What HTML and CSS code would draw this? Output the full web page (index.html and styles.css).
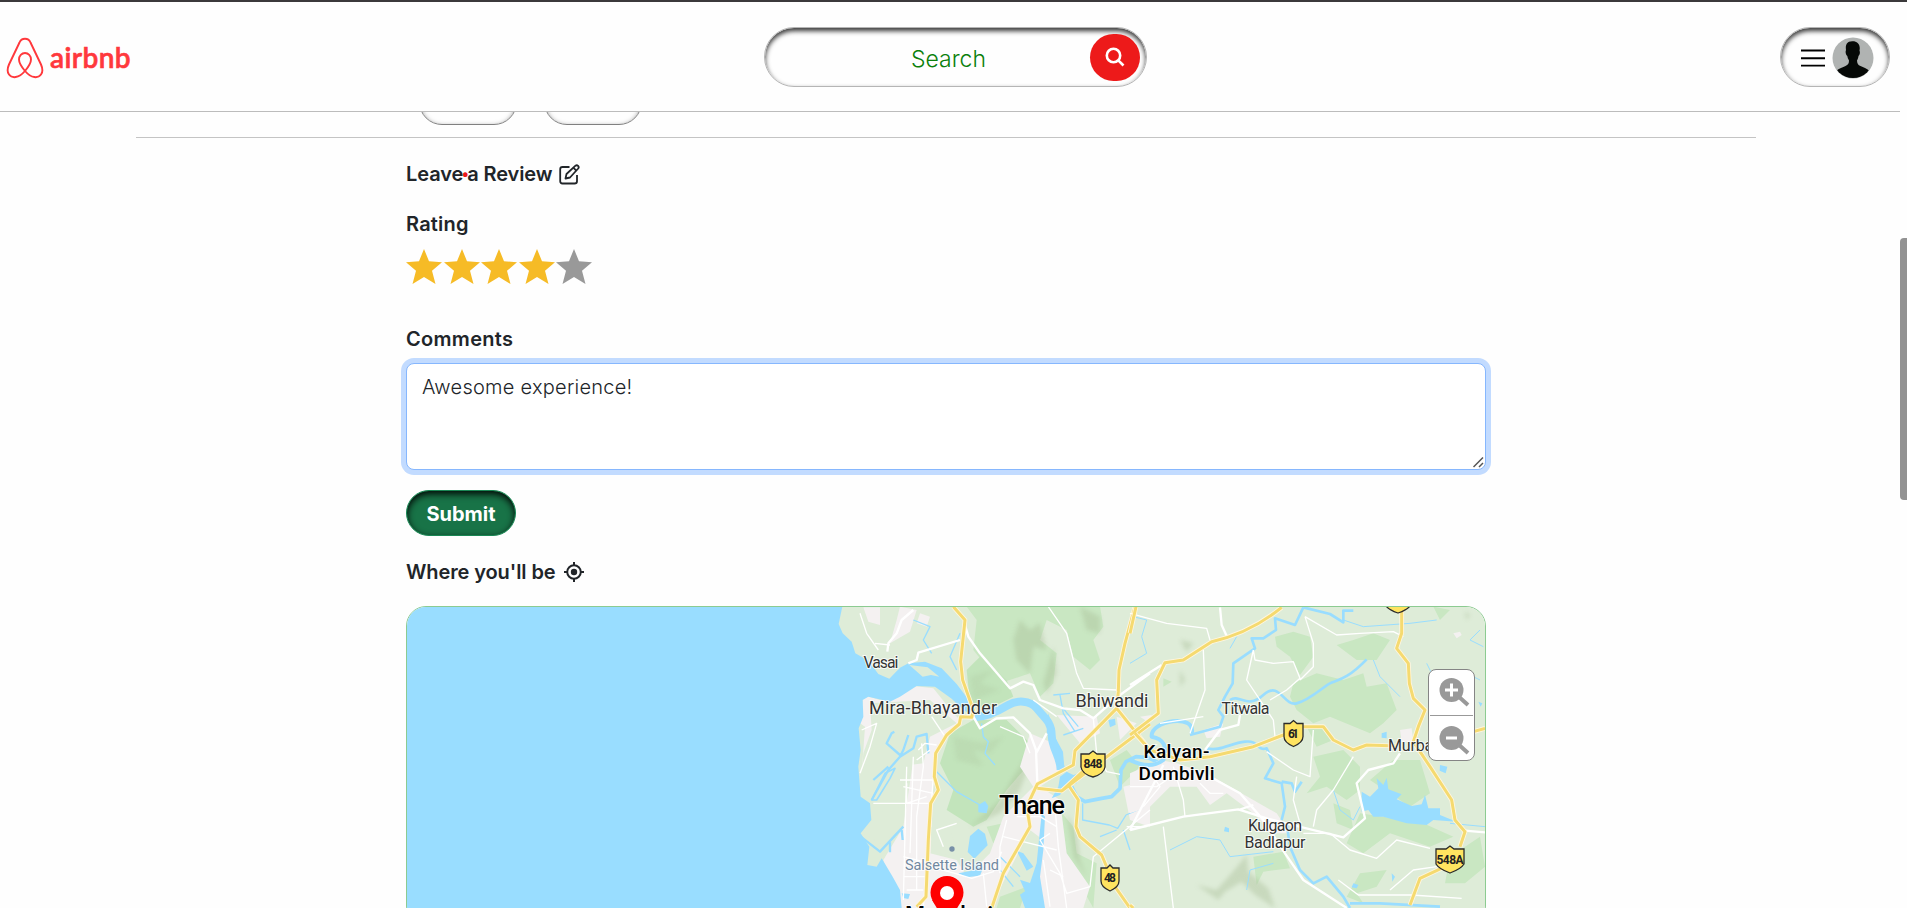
FILE: index.html
```html
<!DOCTYPE html>
<html lang="en">
<head>
<meta charset="utf-8">
<title>Airbnb</title>
<link rel="stylesheet" href="styles.css">
</head>
<body>
<header class="nav">
  <a class="brand">
    <svg class="brand-mark" width="38" height="42" viewBox="0 0 38 42" fill="none" stroke="#ff383c" stroke-width="1.9"><path d="M19 34C14 28 13 25 13 22.500a6 6.500 0 0 1 12 0C25 25 24 28 19 34c-6.500 7.500-13 7.500-16 3.500-2.500-3.300-1.300-7 0-10L13.500 5.500C15.500.5 22.500.5 24.500 5.500L35 27.500c1.300 3 2.500 6.700 0 10-3 4-9.500 4-16-3.500z"/></svg>
    <span class="brand-name">airbnb</span>
  </a>
  <div class="search">
    <span class="search-text">Search</span>
    <span class="search-btn"><svg width="20" height="20" viewBox="0 0 20 20" fill="none" stroke="#fff" stroke-width="2.6"><circle cx="8.500" cy="8.500" r="6.700"/><path d="M13.300 13.300L18.500 18.500"/></svg></span>
  </div>
  <div class="account">
    <svg width="24" height="18" viewBox="0 0 24 18" stroke="#000" stroke-width="1.900"><path d="M0 1.500h24M0 9.300h24M0 16.600h24"/></svg>
    <svg class="avatar" width="42" height="42" viewBox="0 0 42 42"><defs><clipPath id="av"><circle cx="21" cy="21" r="20"/></clipPath></defs><circle cx="21" cy="21" r="20.500" fill="#b0b3b2"/><path clip-path="url(#av)" fill="#050806" d="M14 13c-1-6 2-8.500 5-8.500 5-1 10 2 8.500 9 .8 2 .3 4-1 5.500-.3 2-1 3.500-1.500 4.500.2 3 1 4.500 3.500 5.500 3 1.500 6 2 9 5v10H4V34c3-3 7-3.500 9.500-5 2.500-1.200 3.500-2.500 3.500-5.500-1-1.500-1.500-3-1.700-4.500-1.600-1.500-2.100-4-1.300-6z"/></svg>
  </div>
</header>
<div class="clipped"><span class="pill"></span><span class="pill"></span></div>
<hr class="rule">
<main class="content">
  <h5 class="title review">Leave<span class="required">•</span>a Review
    <svg class="icon" width="21" height="21" viewBox="0 0 21 21" fill="none" stroke="#212529" stroke-width="1.800" stroke-linejoin="round"><path d="M10.500 3H3.500Q1.200 3 1.200 5.300v12Q1.200 19.500 3.500 19.500h12q2.500 0 2.500-2.300V11M6.500 14.500l1-4.500 9-8.300q1.300-1 2.600.2 1.200 1.300.1 2.600l-8.200 9z"/><path d="M14.500 3.800l2.800 2.900"/></svg></h5>
  <h5 class="title rating">Rating</h5>
  <div class="stars">
    <svg viewBox="0 0 36 35"><path d="M18 0l5 12.200 13 1-10 8.600L29.500 35 18 28 6.500 35 10 21.800 0 13.200l13-1z"/></svg>
    <svg viewBox="0 0 36 35"><path d="M18 0l5 12.200 13 1-10 8.600L29.500 35 18 28 6.500 35 10 21.800 0 13.200l13-1z"/></svg>
    <svg viewBox="0 0 36 35"><path d="M18 0l5 12.200 13 1-10 8.600L29.500 35 18 28 6.500 35 10 21.800 0 13.200l13-1z"/></svg>
    <svg viewBox="0 0 36 35"><path d="M18 0l5 12.200 13 1-10 8.600L29.500 35 18 28 6.500 35 10 21.800 0 13.200l13-1z"/></svg>
    <svg class="off" viewBox="0 0 36 35"><path d="M18 0l5 12.200 13 1-10 8.600L29.500 35 18 28 6.500 35 10 21.800 0 13.200l13-1z"/></svg>
  </div>
  <h5 class="title comments">Comments</h5>
  <div class="comment-wrap">
    <textarea class="comment" spellcheck="false">Awesome experience!</textarea>
    <svg class="grip" width="11" height="11" viewBox="0 0 11 11" stroke="#555" stroke-width="1.500"><path d="M.5 10L10 .5M6 10l4-4"/></svg>
  </div>
  <button class="submit">Submit</button>
  <h5 class="title where">Where you'll be
    <svg class="icon target" width="20" height="20" viewBox="0 0 20 20" fill="none" stroke="#212529" stroke-width="2"><circle cx="10" cy="10" r="6.800"/><circle cx="10" cy="10" r="3.200" fill="#212529" stroke="none"/><path d="M10 0v4M10 16v4M0 10h4M16 10h4"/></svg></h5>
  <div class="map">
    <svg class="map-art" width="1080" height="302" viewBox="406 606 1080 302">
      <defs>
        <filter id="soft" x="-10%" y="-10%" width="120%" height="120%"><feGaussianBlur stdDeviation="7"/></filter>
      </defs>
      <rect x="406" y="606" width="1080" height="302" fill="#deecd8"/>
      <g transform="translate(800 600) scale(.33333)">
        <g class="park">
          <path d="M500 20L900 18 910 80 880 120 900 180 870 210 820 170 800 90 740 60 720 120 770 160 760 250 720 290 690 220 600 250 520 150 530 60z"/>
          <path d="M500 210L540 170 620 240 640 290 560 330 510 310z" fill="#c2e4bb"/>
          <path d="M450 400L520 360 620 360 690 430 680 500 620 570 560 660 520 680 440 630 460 570 420 490z" fill="#c2e4bb"/>
          <path d="M600 890L680 860 660 924 590 924zM770 620L820 680 830 760 890 790 880 924 810 800 780 720z"/>
          <path d="M930 480L980 450 1020 500 960 560zM560 680l50-10-30 60z"/>
        </g>
        <g class="relief" filter="url(#soft)">
          <path d="M640 120L660 60 690 90 720 70 740 150 700 140 690 220 650 180zM840 20L900 50 900 100 860 90zM760 140L770 220 740 280 730 250zM640 530L680 470 690 490 660 570 600 640 510 680 600 600zM800 640L830 700 840 780 860 830 820 770z"/>
          <path d="M460 410l90 20 60-20-40 50-50-10 30 50-80-20zM510 230l70-20-40 40 60 20-80 30z" opacity=".5"/>
        </g>
        <g class="urban">
          <path d="M190 22L240 22 240 75 205 65zM300 20L350 30 330 95 270 130 290 60zM190 285L240 300 340 258 400 265 460 340 480 360 410 450 400 560 385 924 290 924 250 780 310 680 340 480 330 430 220 470 185 520 195 380 180 370z" />
          <path d="M390 760L470 780 500 830 570 760 610 650 700 560 660 500 690 400 760 430 780 520 720 560 780 600 800 760 870 860 850 924 700 924 730 720 690 690 570 924 380 924z"/>
          <path d="M770 345L890 350 900 400 840 430zM950 350L1010 370 960 420zM970 560L1050 540 1050 680 990 660zM360 40l30 10-10 30-30-10z"/>
        </g>
        <g class="green-patch"><path d="M210 310L390 300 470 370 390 410 370 490 290 500 210 600 180 560 190 460 215 390zM220 640L310 620 290 700 240 730 190 700zM390 680L450 690 480 770 400 760z"/></g>
        <path class="water" d="M-1182 15H128L116 72 128 100 155 125 166 160 205 182 235 222 268 236 300 203 325 190 375 185 425 205 470 252 520 318 520 348 490 330 455 296 405 260 350 258 300 290 270 305 205 290 188 300 190 350 176 385 182 450 175 500 182 590 210 610 214 660 182 700 208 740 202 795 230 800 245 775 278 830 300 870 305 924H-1182z"/>
        <path fill="#deecd8" d="M328 195l55 7 35 28-25-5-25 5z"/>
        <path class="river" stroke-width="24" d="M525 352C560 350 600 330 625 315S690 300 710 325 755 365 755 405 782 470 782 510"/>
        <path class="water" d="M745 340l22 75 22 40 5 60h-14l-15-60-25-60zM780 530l20-15 20 10 20-5-10 30-30 5-20 30-25 10 20-35zM510 708l25-22 20 15 8 35-40 40-20-20zM475 820l40-8 20-30 15 20-10 25-40 5zM535 615l20-12 10 15-5 22-25-3zM725 640l10 10-5 100-10 80 15 94h-60l-15-40 15-10-15-35 30 10 20-60zM700 800l-30-40-20-8 30 60zM925 360l20-4 2 18-17 8zM305 880l25 2-5 15-15-3z"/>
        <g class="river" stroke-width="7">
          <path d="M215 600L265 510 300 470 340 445 350 410 380 402 385 460 M265 500l-45 40 M300 465l-40-35 15-30 8-5 M325 405L310 450 300 470"/>
          <path d="M215 600l40-80 30-15-15 30-40 65z" stroke-width="5"/>
          <path d="M310 680L240 755 185 712M270 727l0 30M305 690l3 30" />
          <path stroke-width="4" d="M545 370l5 40 15 15-10 35 30 35M410 515l60 60 70 40M640 860l-40-50M660 830l-60-60M340 60l50 20-20 40 25 40M480 100l-30 70 20 40M760 285l50-5M780 285l10 55 35 55M785 320l50 60M790 405l60-20"/>
          <path d="M815 560l15 30 25 15 50-10 30-5 25-25 3-55 15-25 30-15 35 3 45 20" stroke-width="11"/>
          <path d="M848 610l0 50 80 15 25 10 25-40 70-30M970 690l20 60M900 710l50-20" stroke-width="4"/>
        </g>
        <g class="road-white">
          <path stroke-width="7" d="M340 30L305 60 290 100 265 130 262 155 M325 190L350 180 355 158 480 120 M495 75L505 110 540 160 630 265 670 245 700 255 720 300 790 325 840 330 880 355 960 285 1050 220 M520 350L540 385 590 355 640 352 690 400 708 450 712 550 M708 460L740 400"/>
          <path stroke-width="4" d="M180 40L200 100 235 150M225 130l45 5M745 20L800 100 830 220 850 265 950 270M880 355L890 460 920 515 960 523M770 350L700 300"/>
          <path d="M340 470L330 760M365 430L370 500 350 650 350 870M400 530L370 924M320 500L310 900M300 540H400M310 560L400 580M220 610H390M310 770L390 790M310 830H380M320 870H370M355 450l20-20 35 5M350 480l40-30M320 550v60l60-20M390 800l75 20 50 15 65-20 25-60M550 820l10 100M620 660L600 740 600 820M650 650L720 650 770 680M610 710L770 750M765 620L775 740 800 924M750 700L720 720 780 820 800 880 870 860M750 810L790 830M870 860L880 770 1050 630M730 780l20 140M980 680h60M185 390l45-20-20 70-30 80M470 670L410 690 430 740M600 380l70 30 20 50M395 350l40 60"/>
        </g>
        <path class="casing" d="M460 20L495 60 482 185 488 240 520 330 515 352 482 350 478 372 440 405 407 460 403 530 415 570 392 610 385 720 378 890 350 920M575 924L610 820 690 680 680 620 712 552 820 495 825 452 950 325M712 565L785 573 880 485M785 573L1050 372M950 325L1050 450M805 555L835 600 828 680 840 710 905 765 945 860 990 924M1005 20L975 130 957 210 955 275 950 325"/>
        <path class="highway" d="M460 20L495 60 482 185 488 240 520 330 515 352 482 350 478 372 440 405 407 460 403 530 415 570 392 610 385 720 378 890 350 920M575 924L610 820 690 680 680 620 712 552 820 495 825 452 950 325M712 565L785 573 880 485M785 573L1050 372M950 325L1050 450M805 555L835 600 828 680 840 710 905 765 945 860 990 924M1005 20L975 130 957 210 955 275 950 325"/>
        <circle cx="456" cy="747" r="8" fill="#7890a8"/>
      </g>
      <g transform="translate(1130 600) scale(.33333)">
        <g class="park">
          <path d="M435 110L490 95 540 110 550 170 510 225 480 170 440 140zM620 135l50-15 60-20 50 20-40 60-60 0zM490 250L560 220 640 240 700 220 710 260 770 250 800 330 760 370 720 400 600 350 550 370 500 330 480 290z"/>
          <path d="M550 470L640 450 690 500 690 570 650 600 590 560 530 580 570 530zM690 640L760 650 880 670 970 710 900 740 780 700 700 760 650 730zM610 610l50 20 10 60-50-20zM790 480l80 0 30 100-60 40-120-80zM370 770l90-15 20 50-80 10-20 40zM690 820l80-10-30 50-60 20 20 30-50-20zM960 770l90-60 15 90-60 50-60 0zM530 380l50 0 30 40-50 20zM910 20l50 10-30 30zM100 235l25 10-25 15z"/>
        </g>
        <g class="relief" filter="url(#soft)"><path d="M200 855l60 15 40-45 50-60 5 50 60 50 20 60-60-40-40-40-50 30-20 25zM150 120l40 10-20 25zM150 210l15 30-15 20zM1005 35l15 10-10 15z"/></g>
        <g class="urban"><path d="M0 520L90 480 140 490 230 520 300 560 370 600 440 640 480 700 430 700 370 640 290 580 240 615 200 560 120 560 60 620 0 640zM220 390l60-20-10 40-40 5zM810 390l35-5 5 40-35 0zM30 350l35-5-5 25zM970 100l20-5 5 10-15 10z"/></g>
        <g class="river" stroke-width="8">
          <path d="M520 22L495 75 435 55 438 90 400 115 365 115 375 145 310 190 308 250 285 290 265 330 280 350 270 380 180 405" />
          <path d="M185 400C200 340 60 360 65 410Q120 420 100 480 60 510 0 480" stroke-width="12"/>
          <path d="M300 300C330 280 350 330 400 285S460 320 500 310 580 260 600 250 650 240 710 178M230 445C270 455 300 430 345 425S380 455 410 445L430 490 405 535 455 550 465 620 455 660M455 545l30 5 10 25 20-30M470 670L480 740 510 810 550 850 590 830 640 890 660 924M520 22l80 20 40 25 0-35 30 0M660 910l90 0 180 10"/>
          <path stroke-width="3" d="M10 50l40 10-15 50 15 50-50 30M320 110l-20 35M120 750L200 710 270 720 300 770 430 755M430 790l-70 20-10 60M960 670l105 10M890 190l20 40 80-20 60 30M1060 140l-40-20 30-30M640 60L700 80 840 70 920 60M610 570l20 60 40 30 20-40M730 180l20 50 60 60"/>
        </g>
        <path class="water" d="M695 575l25 15 25-25-5-30 20 20 10-22 5 35 40 15-15 15 45 20 30-5 10-28 10 40 35 0 0 20 50 20-70-5-20 15-60-5-70-20-30 0-15-20-20 5zM930 495l22 5-5 20-18-8zM785 820l10 10-8 15zM285 680l12 5 0 12-15-3zM1045 305l12 5-5 10zM755 400l15-5v20l-15-2zM670 850l15 5-5 10-15-3z"/>
        <g class="road-white">
          <path stroke-width="7" d="M0 255L95 195M270 22L275 75 290 108M0 690L160 650 325 628 410 655 520 683 640 712 705 655 680 550 715 510 790 490 810 460M100 495L0 690M240 530L330 580 400 660 465 760 520 840 650 924M1005 692L1065 697M330 345L325 375 270 390 225 450M325 630l45-15"/>
          <path d="M0 40L110 70 230 85 240 120M220 150L225 270 180 400M370 150L375 180 430 190 490 185 510 235 470 270 420 300M370 150L350 240 390 300 430 360 435 410M525 50L550 130 550 200 510 240M525 50L620 105 690 100 790 95 820 110M90 370l130-20M410 455L490 510 540 530 550 390M500 530L490 600 510 670M550 680L560 630 610 570 670 470M520 700L600 700 660 750 740 775 800 720 900 745M100 680L130 924M165 650L160 600 130 500M0 560l80 0 30-20M50 500l40 60-50 60M210 550l30 30 40 0M780 870l70-60 70-10M625 840l60 45 160 0 150 10"/>
        </g>
        <path class="casing" d="M455 22Q360 100 245 125L160 180 105 188 80 240 85 340 0 405M18 20L0 100M15 400L60 450 150 480 240 470 370 440 460 405 520 380 580 380 610 420 670 450 710 435 800 438M815 30V100L800 145 835 190 838 250 850 295 885 330 865 380 850 425 900 500 965 600 975 660 1005 695 990 740M945 800L870 835 840 915M1065 385L1030 395M0 915l10 9"/>
        <path class="highway" d="M455 22Q360 100 245 125L160 180 105 188 80 240 85 340 0 405M18 20L0 100M15 400L60 450 150 480 240 470 370 440 460 405 520 380 580 380 610 420 670 450 710 435 800 438M815 30V100L800 145 835 190 838 250 850 295 885 330 865 380 850 425 900 500 965 600 975 660 1005 695 990 740M945 800L870 835 840 915M1065 385L1030 395M0 915l10 9"/>
      </g>
      <g class="shield">
        <path d="M1081 754h8l4-3 4 3h8v13q-1 7-12 10-11-3-12-10z"/>
        <path d="M1101 868h6l3-3 3 3h6v13q0 6-9 10-9-4-9-10z"/>
        <path d="M1284 723.500h6l3.500-3 3.500 3h6v13q0 6-9.500 10-9.500-4-9.500-10z"/>
        <path d="M1436 849h10l4-3 4 3h10v15q-3 5-14 9-11-4-14-9z"/>
        <path d="M1386 606q3 4 12 7 9-3 12-7z"/>
      </g>
      <g class="shield-text">
        <text x="1093" y="768" textLength="19">848</text><text x="1110" y="882" textLength="12">48</text><text x="1293.500" y="737.500" textLength="11">61</text><text x="1450" y="863.500" textLength="27">548A</text>
      </g>
      <g class="place">
        <text x="881" y="668" font-size="16" textLength="35">Vasai</text>
        <text x="933" y="713.500" font-size="18" textLength="128">Mira-Bhayander</text>
        <text x="1112" y="707" font-size="18" textLength="73">Bhiwandi</text>
        <text x="1245.500" y="714" font-size="16" textLength="48">Titwala</text>
        <text x="1415" y="750.500" font-size="16" textLength="54">Murbad</text>
        <text x="1275" y="831" font-size="16" textLength="54">Kulgaon</text>
        <text x="1275" y="848" font-size="16" textLength="61">Badlapur</text>
        <text class="island" x="952" y="870" font-size="14.500" textLength="94">Salsette Island</text>
        <text class="city" x="1176.500" y="757.500" font-size="19" textLength="66">Kalyan-</text>
        <text class="city" x="1176.500" y="780" font-size="19" textLength="76">Dombivli</text>
        <text class="city" x="1032" y="814" font-size="25" textLength="66">Thane</text>
        <text class="city" x="949" y="923" font-size="23" textLength="88">Mumbai</text>
      </g>
      <path fill="#fe0000" d="M947 876a16.500 16.500 0 0 1 0 33 16.500 16.500 0 0 1 0-33z"/><path fill="#fe0000" d="M932 900h30l-15 25z"/><circle cx="947" cy="893" r="7" fill="#fff"/>
    </svg>
    <div class="zoom">
      <span class="zoom-btn"><svg width="32" height="32" viewBox="0 0 32 32"><circle cx="13.500" cy="13" r="12" fill="#999"/><path d="M20 19l10 9" stroke="#999" stroke-width="4"/><path d="M13.500 6.500v13M7 13h13" stroke="#fff" stroke-width="3"/></svg></span>
      <span class="zoom-btn"><svg width="32" height="32" viewBox="0 0 32 32"><circle cx="13.500" cy="13" r="12" fill="#999"/><path d="M20 19l10 9" stroke="#999" stroke-width="4"/><path d="M8 13h11" stroke="#fff" stroke-width="3"/></svg></span>
    </div>
  </div>
</main>
<div class="scroll-thumb"></div>
</body>
</html>
```

FILE: styles.css
```css
* { box-sizing: border-box; }
body {
  margin: 0;
  height: 908px;
  overflow: hidden;
  position: relative;
  background: #fefefe;
  color: #212529;
  font-family: Inter, "Open Sans", sans-serif;
  border-top: 2px solid #3b393b;
}
.nav {
  width: 1900px;
  height: 110px;
  padding: 25px 10px 0 6px;
  border-bottom: 1px solid #bcbcbc;
  display: grid;
  grid-template-columns: 758px 383px 1fr;
  align-items: start;
}
.brand { display: flex; align-items: flex-start; padding-top: 10px; color: #ff383c; }
.brand-name {
  font: 600 28px/28px Lato, sans-serif;
  letter-spacing: 0.4px;
  margin: 6px 0 0 6px;
  -webkit-text-stroke: 0.6px #ff383c;
}
.search, .account {
  height: 60px;
  border: 1px solid #b5b5b5;
  border-radius: 30px;
  box-shadow: inset 0 3px 5px 0 rgba(0, 0, 0, .8);
  display: flex;
  align-items: center;
}
.search { padding-right: 6px; }
.search-text {
  flex: 1;
  padding: 3px 0 0 42px;
  text-align: center;
  color: #0b800b;
  font-size: 23px;
  font-weight: 300;
}
.search-btn {
  width: 50px;
  height: 47px;
  border-radius: 25px;
  background: #ed1a1a;
  display: flex;
  align-items: center;
  justify-content: center;
}
.account { width: 110px; justify-self: end; padding: 2px 0 0 20px; gap: 7px; }
.clipped { height: 13px; padding-left: 419px; display: flex; gap: 27px; align-items: flex-end; overflow: hidden; }
.pill { width: 98px; height: 46px; border: 1px solid #808080; border-radius: 23px; box-shadow: inset 0 2px 5px rgba(0, 0, 0, .5); }
.rule { width: 1620px; height: 1px; margin: 12px 0 0 136px; border: 0; background: #c4c4c4; }
.content { width: 1080px; margin-left: 406px; padding-top: 24px; }
.title { margin: 0; font-size: 20px; line-height: 24px; font-weight: 600; letter-spacing: 0; white-space: nowrap; display: flex; align-items: center; }
.review { letter-spacing: -0.1px; }
.where { letter-spacing: -0.1px; }
.comments { letter-spacing: 0.3px; }
.rating { letter-spacing: 0.2px; }
.required { color: #ed1a1a; font-size: 15px; width: 6px; margin: 0 -1px; display: flex; justify-content: center; }
.icon { margin-left: 7px; }
.target { margin-left: 8px; }
.rating { margin-top: 26px; }
.stars { margin-top: 13px; display: flex; gap: 1.5px; }
.stars svg { width: 36px; height: 35px; fill: #f6bb26; }
.stars .off { fill: #999; }
.comments { margin-top: 43px; }
.comment-wrap { position: relative; margin-top: 12px; }
.comment {
  display: block;
  width: 1080px;
  height: 107px;
  margin: 0;
  padding: 8px 15px;
  border: 1px solid #86b7fe;
  border-radius: 8px;
  outline: 0;
  box-shadow: 0 0 0 5px #c2dbff;
  resize: none;
  color: #212529;
  background: #fff;
  font: 300 20px/30px Inter, sans-serif;
  letter-spacing: 0.25px;
}
.grip { position: absolute; right: 2px; bottom: 2px; }
.submit {
  display: block;
  width: 110px;
  height: 46px;
  margin-top: 20px;
  padding: 2px 0 0;
  border: 1px solid #198754;
  border-radius: 23px;
  background: #187347;
  box-shadow: inset 0 3px 7px 0 rgba(0, 0, 0, .95);
  color: #fff;
  font: 700 20px/24px Inter, sans-serif;
}
.where { margin-top: 24px; }
.map { position: relative; height: 320px; margin-top: 22px; border-radius: 20px; border: 1px solid #8ccb91; overflow: hidden; }
.map-art { display: block; margin: -1px; }
.park { fill: #c9e7c2; }
.relief { fill: #a8bd96; opacity: .4; }
.urban { fill: #f4f1f1; }
.green-patch { fill: #deecd8; }
.water { fill: #99ddff; }
.river { fill: none; stroke: #99ddff; stroke-linejoin: round; }
.road-white { fill: none; stroke: #fff; stroke-width: 4; stroke-linejoin: round; }
.casing { fill: none; stroke: #fff6df; stroke-width: 14; stroke-linejoin: round; }
.highway { fill: none; stroke: #f5da70; stroke-width: 9; stroke-linejoin: round; }
.shield { fill: #ffe460; stroke: #2b2b2b; stroke-width: 1.3; }
.shield-text, .place { font-family: Roboto, sans-serif; text-anchor: middle; }
.shield-text { font-size: 12px; font-weight: 700; fill: #222; }
.place { fill: #333; stroke: #fff; stroke-width: 2px; stroke-opacity: .8; paint-order: stroke; }
.island { fill: #7188a0; }
.city { fill: #000; font-weight: 500; }
.zoom { position: absolute; top: 62px; right: 10px; width: 47px; height: 92px; border: 1px solid #858585; border-radius: 8px; background: #fff; padding: 0 1px; }
.zoom-btn { display: flex; height: 45px; padding: 7px 0 0 8px; }
.zoom-btn + .zoom-btn { border-top: 1px solid #999; padding-top: 9px; }
.scroll-thumb { position: absolute; top: 236px; right: 0; width: 7px; height: 262px; border-radius: 4px 0 0 4px; background: #929292; }
```
